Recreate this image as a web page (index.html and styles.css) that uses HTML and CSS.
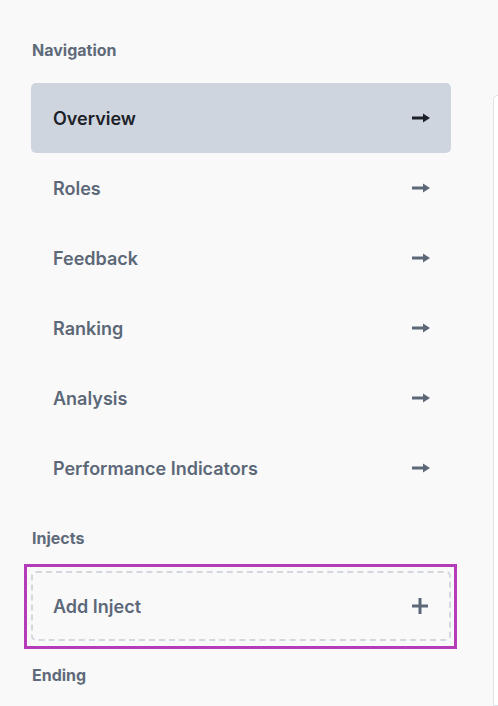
FILE: index.html
```html
<!DOCTYPE html>
<html lang="en">
<head>
<meta charset="utf-8">
<title>Sidebar</title>
<link rel="stylesheet" href="styles.css">
</head>
<body>
<div class="layout">
  <aside class="sidebar">
    <h3 class="section-title">Navigation</h3>
    <nav class="nav-list">
      <a class="nav-item active" href="#"><span>Overview</span>
        <svg class="arrow" viewBox="0 0 18 10" width="18" height="10"><rect x="0" y="3.5" width="13" height="3" fill="currentColor"/><polygon points="11,0.5 18,5 11,9.5" fill="currentColor"/></svg></a>
      <a class="nav-item" href="#"><span>Roles</span>
        <svg class="arrow" viewBox="0 0 18 10" width="18" height="10"><rect x="0" y="3.5" width="13" height="3" fill="currentColor"/><polygon points="11,0.5 18,5 11,9.5" fill="currentColor"/></svg></a>
      <a class="nav-item" href="#"><span>Feedback</span>
        <svg class="arrow" viewBox="0 0 18 10" width="18" height="10"><rect x="0" y="3.5" width="13" height="3" fill="currentColor"/><polygon points="11,0.5 18,5 11,9.5" fill="currentColor"/></svg></a>
      <a class="nav-item" href="#"><span>Ranking</span>
        <svg class="arrow" viewBox="0 0 18 10" width="18" height="10"><rect x="0" y="3.5" width="13" height="3" fill="currentColor"/><polygon points="11,0.5 18,5 11,9.5" fill="currentColor"/></svg></a>
      <a class="nav-item" href="#"><span>Analysis</span>
        <svg class="arrow" viewBox="0 0 18 10" width="18" height="10"><rect x="0" y="3.5" width="13" height="3" fill="currentColor"/><polygon points="11,0.5 18,5 11,9.5" fill="currentColor"/></svg></a>
      <a class="nav-item" href="#"><span>Performance Indicators</span>
        <svg class="arrow" viewBox="0 0 18 10" width="18" height="10"><rect x="0" y="3.5" width="13" height="3" fill="currentColor"/><polygon points="11,0.5 18,5 11,9.5" fill="currentColor"/></svg></a>
    </nav>
    <h3 class="section-title lower">Injects</h3>
    <div class="focus-ring">
      <button class="add-item" type="button"><span>Add Inject</span>
        <svg class="plus" viewBox="0 0 16 16" width="16" height="16"><rect x="6.5" y="0" width="3" height="16" fill="currentColor"/><rect x="0" y="6.5" width="16" height="3" fill="currentColor"/></svg></button>
    </div>
    <h3 class="section-title lower">Ending</h3>
  </aside>
  <main class="content"></main>
</div>
</body>
</html>
```

FILE: styles.css
```css
* { box-sizing: border-box; }
html, body { margin: 0; padding: 0; height: 100%; overflow: hidden; }
body {
  background: #f9f9f9;
  font-family: Inter, "Noto Sans", sans-serif;
  color: #5c6878;
}
.layout {
  display: flex;
  height: 100%;
}
.sidebar {
  width: 493px;
  flex: none;
  padding: 16px 0 0 31px;
}
.section-title {
  margin: 0;
  padding: 24px 0 23px 1px;
  font-size: 16px;
  line-height: 20px;
  font-weight: 700;
  color: #5f6b7a;
}
.section-title.lower {
  padding-top: 25px;
  padding-bottom: 23px;
}
.nav-list {
  display: flex;
  flex-direction: column;
  width: 420px;
}
.nav-item {
  display: flex;
  align-items: center;
  justify-content: space-between;
  height: 70px;
  padding: 0 21px 0 22px;
  border-radius: 5px;
  text-decoration: none;
  font-size: 18px;
  font-weight: 600;
  color: #5c6878;
}
.nav-item.active {
  background: #cfd5df;
  color: #1c2128;
}
.arrow { display: block; }
.focus-ring {
  width: 433px;
  margin: -7px 0 -9px -7px;
  padding: 4px 4px 5px 4px;
  border: 3px solid #b43cb9;
}
.add-item {
  display: flex;
  align-items: center;
  justify-content: space-between;
  width: 420px;
  height: 70px;
  padding: 0 21px 0 20px;
  background: transparent;
  border: 2px dashed #d3d7de;
  border-radius: 5px;
  font-family: inherit;
  font-size: 18px;
  font-weight: 600;
  color: #5c6878;
  cursor: pointer;
}
.plus { display: block; }
.content {
  flex: 1;
  margin-top: 95px;
  background: #ffffff;
  border: 1px solid #dfe2e8;
  border-right: none;
  border-radius: 8px 0 0 0;
}
```
